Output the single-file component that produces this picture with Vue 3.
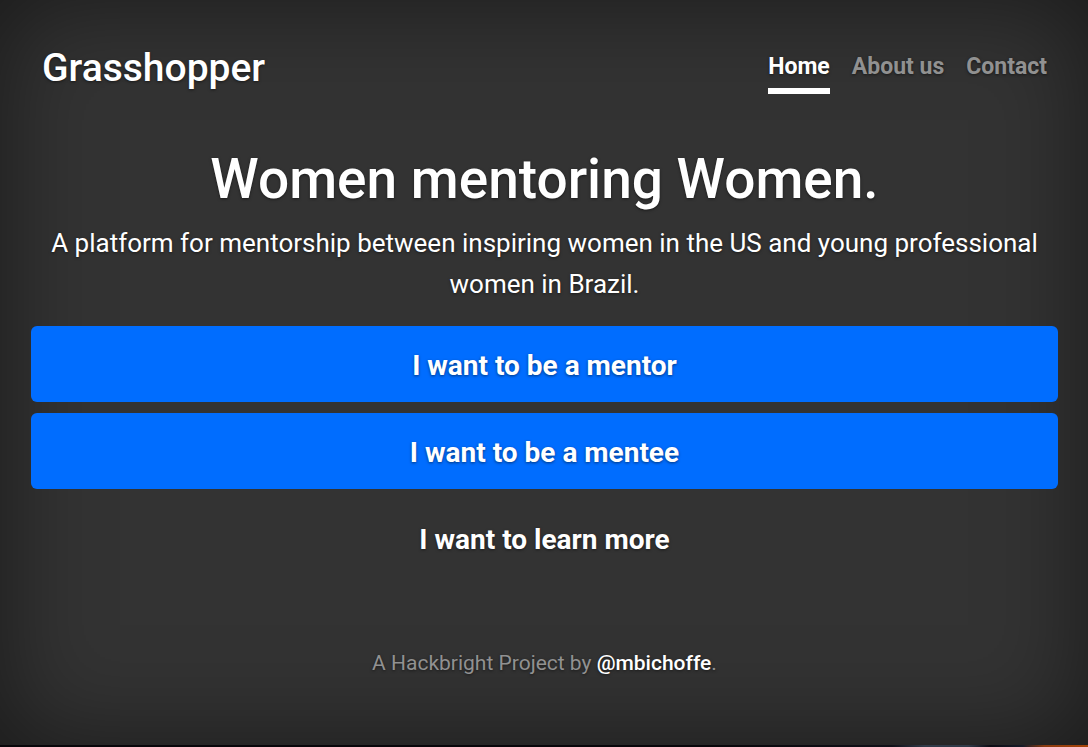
<script setup>
const links = [
  { label: 'Home', active: true },
  { label: 'About us', active: false },
  { label: 'Contact', active: false }
]
</script>

<template>
  <div class="page">
    <div class="cover">
      <header>
        <h3>Grasshopper</h3>
        <nav>
          <a v-for="link in links" :key="link.label" href="#" :class="{ active: link.active }">{{ link.label }}</a>
        </nav>
      </header>
      <main>
        <h1>Women mentoring Women.</h1>
        <p class="lead">A platform for mentorship between inspiring women in the US and young professional women in Brazil.</p>
        <div class="actions">
          <button type="button" class="primary">I want to be a mentor</button>
          <button type="button" class="primary">I want to be a mentee</button>
          <button type="button">I want to learn more</button>
        </div>
      </main>
      <footer>A Hackbright Project by <a href="#">@mbichoffe</a>.</footer>
    </div>
    <div class="edge"></div>
  </div>
</template>

<style>
body {
  margin: 0;
  background: #333;
}
</style>

<style scoped>
* {
  box-sizing: border-box;
}
.page {
  display: flex;
  flex-direction: column;
  min-height: 100vh;
  color: #fff;
  font-family: Roboto, "Liberation Sans", sans-serif;
  text-align: center;
  text-shadow: 0 1px 3px rgba(0, 0, 0, 0.5);
}
.cover {
  flex: 1;
  padding: 43px 30px 0 31px;
  background: #333;
  box-shadow: inset 0 0 100px rgba(0, 0, 0, 0.5);
}
header {
  display: flex;
  justify-content: space-between;
  padding: 0 11px;
}
h3 {
  margin: 0;
  font-size: 39px;
  line-height: 50px;
  font-weight: 500;
}
nav {
  display: flex;
  gap: 22px;
}
nav a {
  height: 51px;
  border-bottom: 6px solid transparent;
  color: #919191;
  font-size: 23px;
  line-height: 48px;
  font-weight: 700;
  text-decoration: none;
}
nav a.active {
  color: #fff;
  border-color: #fff;
}
main {
  padding-top: 52px;
}
h1 {
  margin: 0;
  font-size: 55px;
  line-height: 66px;
  font-weight: 500;
}
.lead {
  margin: 11px 0 21px;
  font-size: 26px;
  line-height: 41px;
}
.actions {
  display: flex;
  flex-direction: column;
  gap: 11px;
}
button {
  height: 76px;
  padding: 4px 16px 0;
  border: 0;
  border-radius: 6px;
  background: transparent;
  color: #fff;
  font: inherit;
  font-size: 28px;
  line-height: 40px;
  font-weight: 700;
  text-shadow: inherit;
}
.primary {
  background: #006dff;
}
footer {
  padding: 71px 0 40px;
  color: #919191;
  font-size: 21px;
  line-height: 32px;
}
footer a {
  color: #fff;
  font-weight: 500;
  text-decoration: none;
}
.edge {
  height: 2px;
  background: linear-gradient(90deg, #08060a 0 65%, #101018 82%, #303a48 85% 89%, #0d0c14 91%, #171b28 94%, #8a3a10 96%, #a84408);
}
</style>
